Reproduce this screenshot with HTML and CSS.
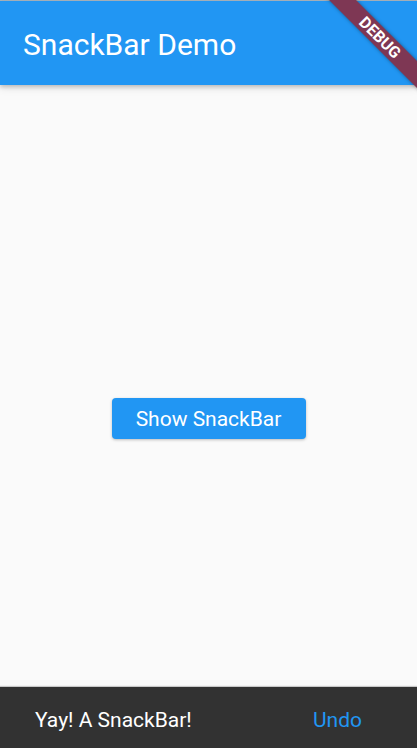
FILE: index.html
```html
<!DOCTYPE html>
<html>
<head>
<meta charset="utf-8">
<link rel="stylesheet" href="styles.css">
</head>
<body>
<div class="screen">
  <div class="topline"></div>
  <header class="appbar"><h1 class="title">SnackBar Demo</h1></header>
  <main class="content"><button class="btn">Show SnackBar</button></main>
  <div class="snackbar"><span class="msg">Yay! A SnackBar!</span><span class="action">Undo</span></div>
  <div class="banner"><span>DEBUG</span></div>
</div>
</body>
</html>
```
FILE: styles.css
```css
html, body {
  margin: 0;
  padding: 0;
  background: #fafafa;
}
.screen {
  position: relative;
  width: 417px;
  height: 748px;
  overflow: hidden;
  display: flex;
  flex-direction: column;
  background: #fafafa;
  font-family: Roboto, "Liberation Sans", sans-serif;
}
.topline {
  height: 1px;
  background: #a9b4bd;
  flex: none;
}
.appbar {
  flex: none;
  height: 84px;
  background: #2196f3;
  display: flex;
  align-items: center;
  padding: 0 23px;
  box-shadow: 0 2px 4px rgba(0,0,0,0.2), 0 4px 8px rgba(0,0,0,0.08);
  position: relative;
  z-index: 1;
}
.title {
  margin: 0;
  padding-top: 3px;
  font-size: 30px;
  font-weight: 400;
  color: #fff;
}
.content {
  flex: 1;
  display: flex;
  align-items: center;
  justify-content: center;
  padding-top: 4px;
}
.btn {
  width: 194px;
  height: 41px;
  border: none;
  border-radius: 4px;
  background: #2196f3;
  color: #fff;
  font-family: Roboto, "Liberation Sans", sans-serif;
  font-size: 21px;
  box-shadow: 0 1px 3px rgba(0,0,0,0.25);
  padding: 0;
}
.snackbar {
  position: absolute;
  left: 0;
  right: 0;
  bottom: 0;
  height: 61px;
  box-sizing: border-box;
  background: #323232;
  display: flex;
  align-items: center;
  justify-content: space-between;
  padding: 4px 55px 0 35px;
  box-shadow: 0 -1px 1px rgba(0,0,0,0.2);
  z-index: 2;
}
.msg {
  color: #fff;
  font-size: 21px;
}
.action {
  color: #2196f3;
  font-size: 21px;
}
.banner {
  position: absolute;
  left: 310px;
  top: 28px;
  width: 140px;
  height: 19px;
  transform: rotate(45deg);
  background: #7e3754;
  box-shadow: 0 0 4px rgba(0,0,0,0.4);
  display: flex;
  align-items: center;
  justify-content: center;
  z-index: 3;
}
.banner span {
  color: #fff;
  font-size: 16px;
  font-weight: 700;
  line-height: 1;
}
```
